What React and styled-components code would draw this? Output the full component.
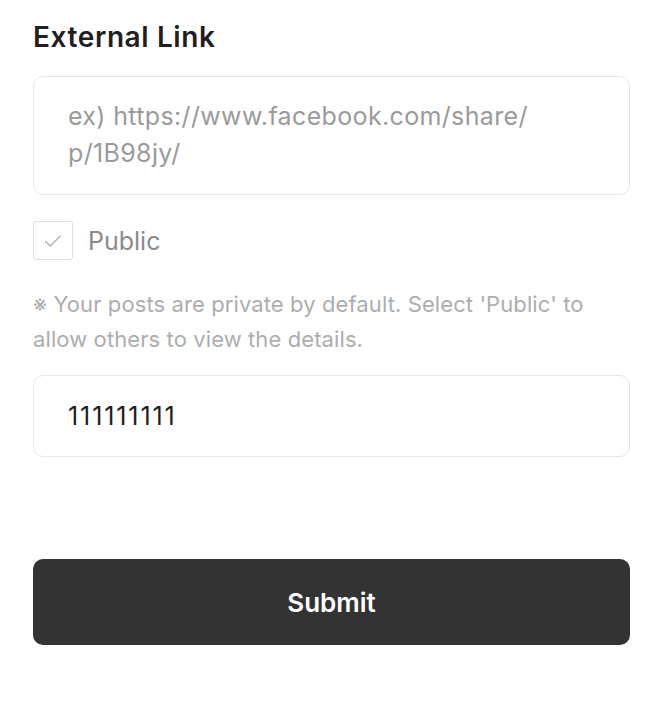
import React, { useState } from 'react';
import styled, { createGlobalStyle } from 'styled-components';

const GlobalStyle = createGlobalStyle`
  html, body {
    margin: 0;
    padding: 0;
    background: #ffffff;
  }
  body {
    font-family: Inter, "Noto Sans", sans-serif;
    -webkit-font-smoothing: antialiased;
  }
`;

const Page = styled.form`
  width: 597px;
  padding: 17px 0 0 33px;
  display: flex;
  flex-direction: column;
`;

const Title = styled.h2`
  margin: 0 0 19px;
  font-size: 28px;
  line-height: 40px;
  font-weight: 600;
  color: #1f1f1f;
  letter-spacing: 0.6px;
`;

const Field = styled.div`
  box-sizing: border-box;
  width: 100%;
  height: ${(p) => p.height}px;
  border: 1.5px solid #e6e6e6;
  border-radius: 10px;
  padding: ${(p) => p.pad};
  display: flex;
  align-items: ${(p) => (p.center ? 'center' : 'flex-start')};
`;

const TextArea = styled.textarea`
  width: 100%;
  height: 100%;
  border: none;
  outline: none;
  resize: none;
  padding: 0;
  font-family: inherit;
  font-size: 25px;
  line-height: 37px;
  letter-spacing: 0.35px;
  color: #222;
  background: transparent;
  &::placeholder {
    color: #9a9a9a;
  }
`;

const TextInput = styled.input`
  width: 100%;
  border: none;
  outline: none;
  padding: 0;
  font-family: inherit;
  font-size: 25px;
  line-height: 32px;
  letter-spacing: 1.9px;
  color: #1e1e1e;
  background: transparent;
`;

const CheckRow = styled.label`
  display: flex;
  align-items: center;
  gap: 15px;
  margin-top: 26px;
  cursor: pointer;
`;

const Box = styled.span`
  box-sizing: border-box;
  width: 40px;
  height: 39px;
  border: 1.5px solid #dedede;
  border-radius: 3px;
  display: flex;
  align-items: center;
  justify-content: center;
  background: ${(p) => (p.checked ? '#333' : '#fff')};
`;

const CheckLabel = styled.span`
  font-size: 25px;
  color: #8a8a8a;
`;

const Note = styled.p`
  margin: 27px 0 18px;
  font-size: 22px;
  line-height: 35px;
  letter-spacing: 0.1px;
  color: #adadad;
`;

const SubmitButton = styled.button`
  margin-top: 102px;
  width: 100%;
  height: 86px;
  border: none;
  border-radius: 10px;
  background: #333333;
  color: #ffffff;
  font-family: inherit;
  font-size: 26px;
  font-weight: 600;
  cursor: pointer;
`;

export default function App() {
  const [isPublic, setIsPublic] = useState(false);
  const [code, setCode] = useState('111111111');

  return (
    <>
      <GlobalStyle />
      <Page onSubmit={(e) => e.preventDefault()}>
        <Title>External Link</Title>
        <Field height={119} pad="21px 34px 0">
          <TextArea placeholder={'ex) https://www.facebook.com/share/\np/1B98jy/'} />
        </Field>
        <CheckRow onClick={() => setIsPublic(!isPublic)}>
          <Box checked={isPublic}>
            <svg width="22" height="22" viewBox="0 0 24 24" fill="none">
              <path
                d="M4 12.5l5 5L20 6.5"
                stroke={isPublic ? '#fff' : '#b5b5b5'}
                strokeWidth="1.6"
                strokeLinecap="round"
                strokeLinejoin="round"
              />
            </svg>
          </Box>
          <CheckLabel>Public</CheckLabel>
        </CheckRow>
        <Note>※ Your posts are private by default. Select 'Public' to allow others to view the details.</Note>
        <Field height={82} pad="0 34px" center>
          <TextInput value={code} onChange={(e) => setCode(e.target.value)} />
        </Field>
        <SubmitButton type="submit">Submit</SubmitButton>
      </Page>
    </>
  );
}
